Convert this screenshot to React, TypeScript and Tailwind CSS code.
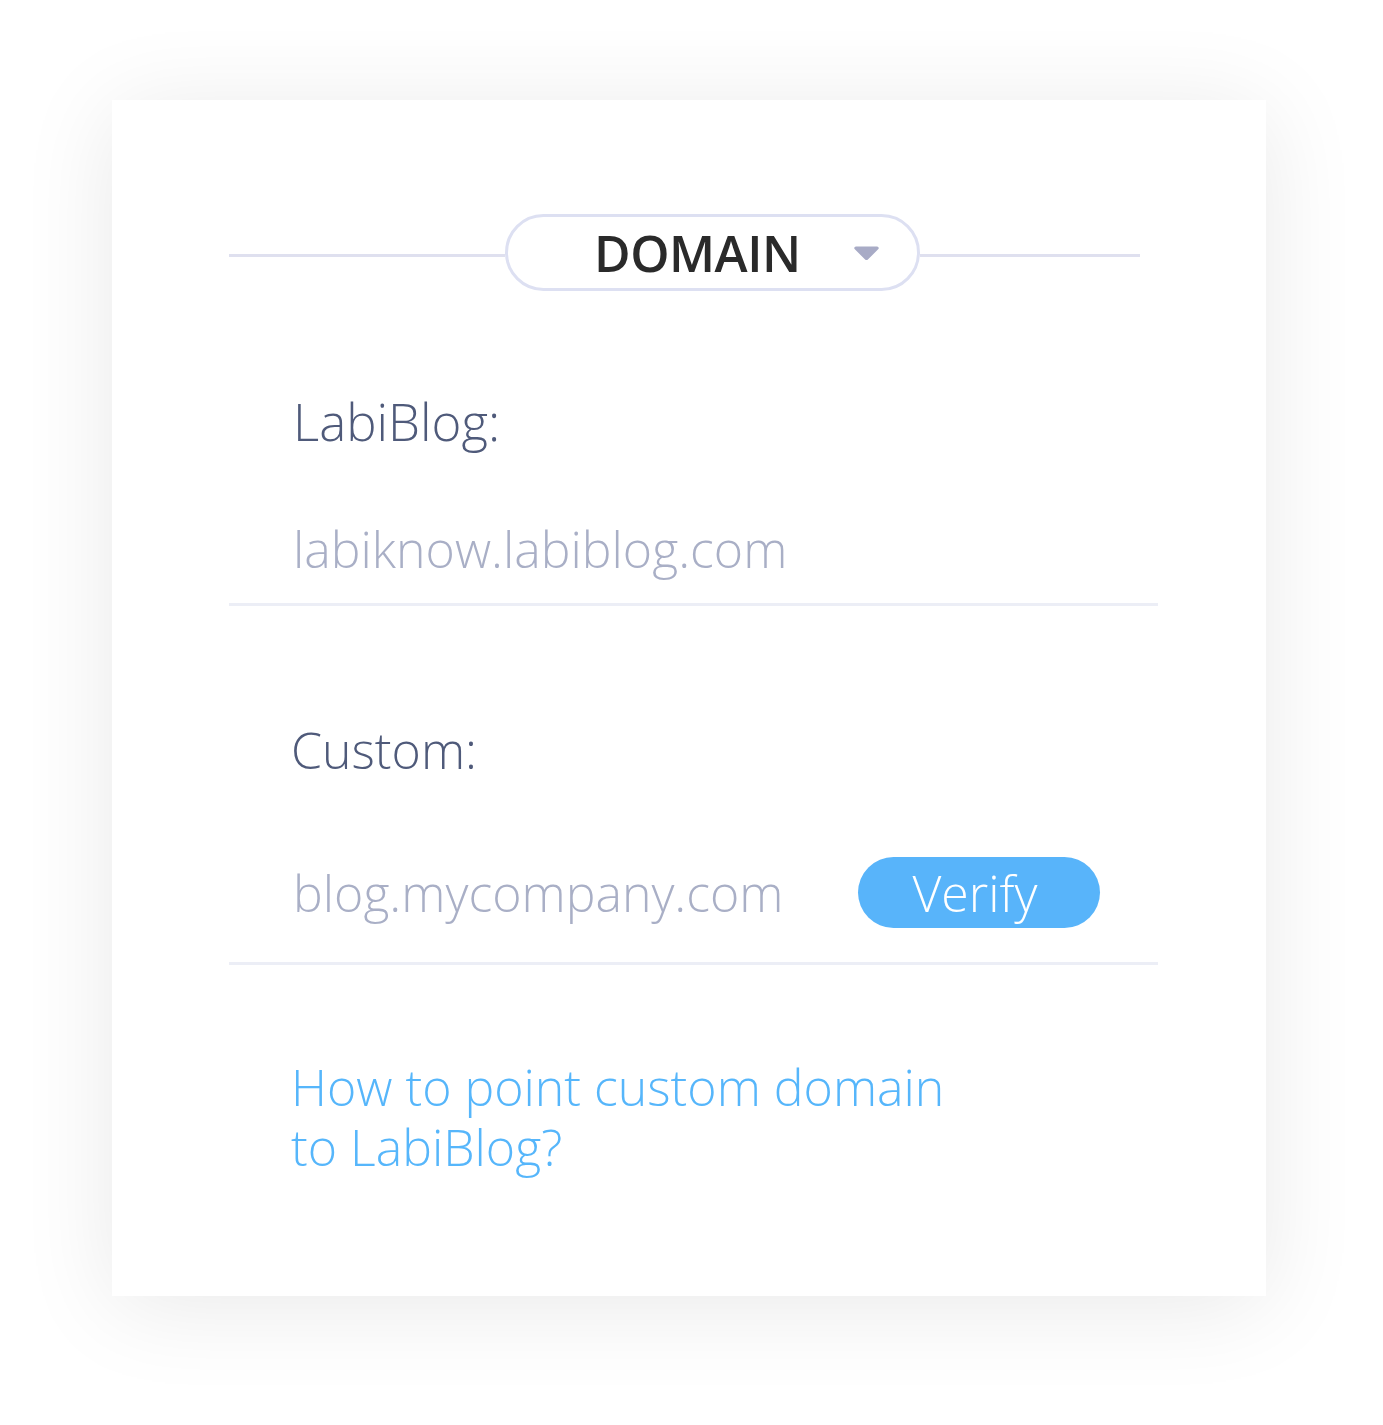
import React from "react";

const font = { fontFamily: '"Open Sans", "Noto Sans", sans-serif' };

function Caret() {
  return (
    <svg width="27" height="16" viewBox="0 0 27 16" className="block">
      <path
        d="M3 1.5h21c1.4 0 2.2 1.5 1.4 2.6l-10.5 10.4c-.8.8-2 .8-2.8 0L1.6 4.1C.8 3 1.6 1.5 3 1.5z"
        fill="#a8abc6"
      />
    </svg>
  );
}

function DomainHeader() {
  return (
    <div className="flex items-start h-[77px] w-[911px]">
      <div className="w-[276px] h-[3px] mt-[40px] bg-[#dfe0ef]" />
      <button className="w-[415px] h-[77px] shrink-0 rounded-full border-[3px] border-[#dde0f2] bg-white flex items-center pl-[86px] pr-[37px] justify-between">
        <span className="text-[50px] leading-[60px] font-semibold text-[#2a2a2a] tracking-[-0.5px]">
          DOMAIN
        </span>
        <Caret />
      </button>
      <div className="flex-1 h-[3px] mt-[40px] bg-[#dfe0ef]" />
    </div>
  );
}

export default function App() {
  return (
    <div className="min-h-screen bg-white pt-[100px] pl-[112px]" style={font}>
      <div className="w-[1154px] h-[1196px] bg-white shadow-[0_10px_90px_rgba(0,0,0,0.09)] pt-[114px] pl-[117px] pr-[108px]">
        <DomainHeader />

        <div className="mt-[100px] pl-[64px] text-[51px] leading-[60px] font-light text-[#4f5a7a]">
          LabiBlog:
        </div>
        <div className="mt-[68px] pb-[24px] border-b-[3px] border-[#eceef6]">
          <div className="pl-[64px] text-[50px] leading-[60px] font-light text-[#a9afc6]">
            labiknow.labiblog.com
          </div>
        </div>

        <div className="mt-[114px] pl-[62px] text-[50px] leading-[60px] font-light text-[#4f5a7a]">
          Custom:
        </div>
        <div className="mt-[77px] pb-[34px] border-b-[3px] border-[#eceef6] flex items-center h-[108px] pl-[64px]">
          <div className="w-[565px] text-[50px] leading-[60px] font-light text-[#a9afc6]">
            blog.mycompany.com
          </div>
          <button className="w-[242px] h-[71px] rounded-full bg-[#58b4fa] text-white text-[50px] leading-[60px] font-light pr-[8px]">
            Verify
          </button>
        </div>

        <a
          href="#"
          className="block mt-[92px] pl-[62px] text-[50px] leading-[60px] font-light text-[#56b6fb]"
        >
          How to point custom domain
          <br />
          to LabiBlog?
        </a>
      </div>
    </div>
  );
}
